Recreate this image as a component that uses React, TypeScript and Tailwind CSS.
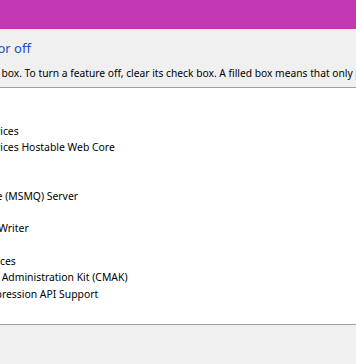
import React from "react";

const features = [
  "Hyper-V",
  "Internet Explorer 11",
  "Internet Information Services",
  "Internet Information Services Hostable Web Core",
  "Legacy Components",
  "Media Features",
  "Microsoft Message Queue (MSMQ) Server",
  "Microsoft Print to PDF",
  "Microsoft XPS Document Writer",
  "MultiPoint Connector",
  "Print and Document Services",
  "RAS Connection Manager Administration Kit (CMAK)",
  "Remote Differential Compression API Support",
  "Services for NFS",
];

function App() {
  return (
    <div className="w-[356px] h-[364px] overflow-hidden bg-[#f0f0f0] font-['Noto_Sans',sans-serif] text-black">
      {/* title bar */}
      <div className="h-[29px] bg-[#c239b3]" />

      {/* header */}
      <div className="h-[59px] border-b border-[#a0a0a0] bg-[#f0f0f0] pt-[10px] whitespace-nowrap overflow-hidden">
        <div className="-ml-[166px] text-[13px] leading-[18px] text-[#1a4cc0]">
          Turn Windows features on or off
        </div>
        <div className="-ml-[174px] mt-[9px] text-[10.25px] leading-[14px] text-black">
          To turn a feature on, select its check box. To turn a feature off, clear its check box. A filled
          box means that only part of the feature is turned on.
        </div>
      </div>

      {/* tree */}
      <div className="h-[237px] border-b border-[#a0a0a0] bg-white pt-[2px] overflow-hidden">
        <ul className="-ml-[125px] whitespace-nowrap">
          {features.map((f) => (
            <li key={f} className="h-[16.3px] text-[10.4px] leading-[16.3px] text-black">
              {f}
            </li>
          ))}
        </ul>
      </div>
    </div>
  );
}

export default App;
